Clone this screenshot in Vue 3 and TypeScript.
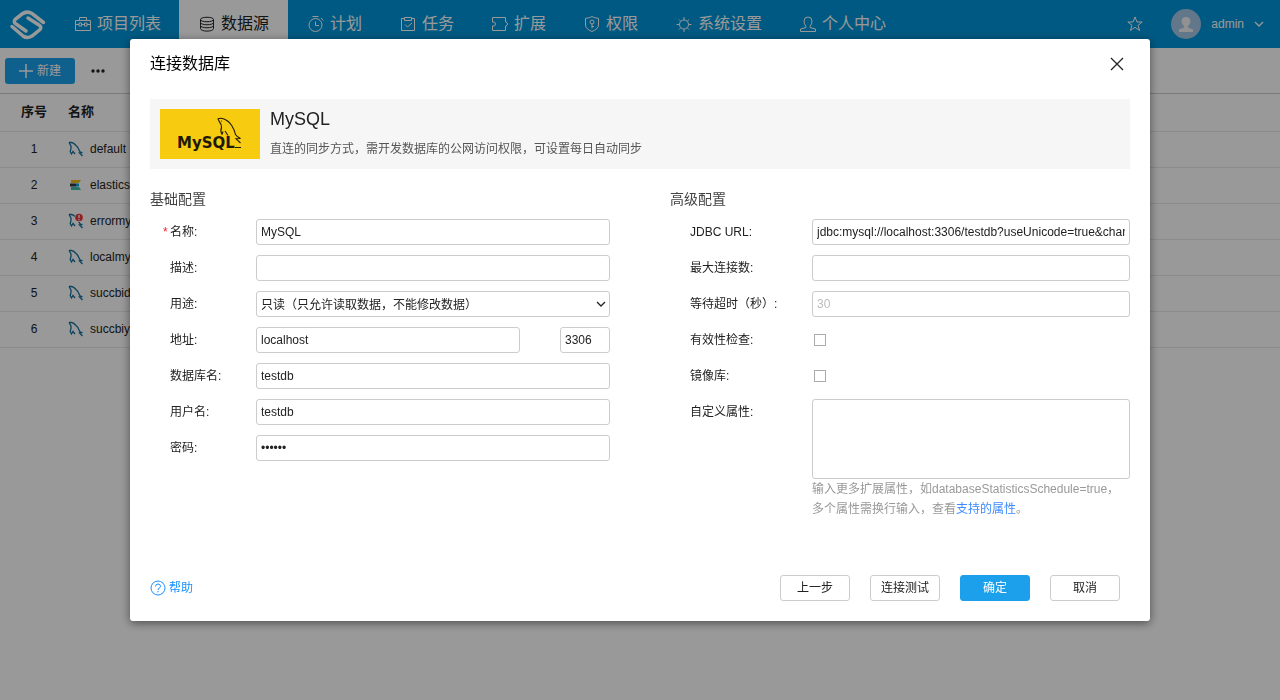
<script setup lang="ts">
import { ref } from 'vue'

interface NavItem {
  label: string
  icon: string
  active?: boolean
}

interface Source {
  name: string
  kind: 'mysql' | 'elastic' | 'error'
}

const navItems: NavItem[] = [
  { label: '项目列表', icon: 'M.5 4.500h15v10H.5zM4.500 4.500v-3h7v3M.5 8.500h3.500M6.500 8.500h3M12 8.500h3.500M4 7h2.500v3H4zM9.500 7H12v3H9.500z' },
  { label: '数据源', icon: 'M1.5 3.5C1.5 .5 14.5 .5 14.5 3.5S1.5 6.500 1.5 3.5V6.500C1.500 9.500 14.500 9.500 14.500 6.500V3.500M1.500 6.500V9.500C1.500 12.500 14.500 12.500 14.500 9.500V6.500M1.500 9.500V12.500C1.500 16 14.500 16 14.500 12.500V9.500', active: true },
  { label: '计划', icon: 'M7.500 2.500A6.500 6.500 0 1 0 7.500 15.500A6.500 6.500 0 1 0 7.500 2.500M4.500 .5h6M7.500 5.500v4h3.500M13 2l2.500 2.500' },
  { label: '任务', icon: 'M4.500 2.500h-3v12h13v-12h-3M4.500 1.500h7v3h-7zM5 8.500l2.500 2.500L12 7' },
  { label: '扩展', icon: 'M.5 1.500h13v4.500q2 0 2 2t-2 2v4.500H.5V10q3 .5 3-2t-3-2z' },
  { label: '权限', icon: 'M8 .5q3 1.800 6.500 1.800V9q0 4-6.500 6.500Q1.500 13 1.500 9V2.300Q5 2.300 8 .5M8 4A2 2 0 1 0 8 8A2 2 0 1 0 8 4M8 8v4.500M8 10.500h2' },
  { label: '系统设置', icon: 'M8 4A4.500 4.500 0 1 0 8 13A4.500 4.500 0 1 0 8 4M8 4V1M8 13v3M3.500 8.500H.5M12.500 8.500h3M4.800 5.300L3 3.500M11.200 5.300L13 3.500M4.800 11.700L3 13.500M11.200 11.700l1.800 1.800' },
  { label: '个人中心', icon: 'M6 10.500Q4 8 4 5Q4 1 8 1t4 4q0 3-2 5.500v1l5.500 1.500v2.500H.5v-2.500L6 11.500z' },
]

const sources: Source[] = [
  { name: 'default', kind: 'mysql' },
  { name: 'elastics', kind: 'elastic' },
  { name: 'errormy', kind: 'error' },
  { name: 'localmy', kind: 'mysql' },
  { name: 'succbid', kind: 'mysql' },
  { name: 'succbiy', kind: 'mysql' },
]

const form = ref({
  name: 'MySQL',
  description: '',
  usage: 'readonly',
  host: 'localhost',
  port: '3306',
  database: 'testdb',
  user: 'testdb',
  password: 'testdb',
  url: 'jdbc:mysql://localhost:3306/testdb?useUnicode=true&char',
  maxConnections: '',
  timeout: '',
  validate: false,
  mirror: false,
  properties: '',
})
</script>

<template>
  <div class="page">
    <header class="topbar">
      <svg class="brand" viewBox="0 0 44 36" aria-hidden="true">
        <path d="M37.500 16.500L26 7.500Q21 4.500 16 8L9 13.500Q7 16 10 18L20 25" />
        <path d="M6 20.500L17 30Q21 33 26 30L34 23.500Q36 21 33 19L22 12" />
      </svg>
      <nav class="nav">
        <a v-for="item in navItems" :key="item.label" href="#" :class="['nav-item', { active: item.active }]">
          <svg viewBox="0 0 16 16" aria-hidden="true"><path :d="item.icon" /></svg>
          <span>{{ item.label }}</span>
        </a>
      </nav>
      <div class="account">
        <svg class="star" viewBox="0 0 16 16" aria-hidden="true">
          <path d="M8 1l2 5h5.200L11 9.300l1.600 5.200L8 11.300l-4.600 3.200L5 9.300L.8 6H6z" />
        </svg>
        <svg class="avatar" viewBox="0 0 30 30" aria-hidden="true">
          <circle cx="15" cy="15" r="15" fill="#a4c8e6" />
          <path d="M15 8q4.500 0 4.500 4.500Q19 16 17 17v1.500l5 2v2.500H8v-2.500l5-2V17q-2-1-2.500-4.500Q10.500 8 15 8z" fill="#f2f2f2" />
        </svg>
        <span class="user">admin</span>
        <svg class="caret" viewBox="0 0 10 6" aria-hidden="true"><path d="M1 1l4 4l4-4" /></svg>
      </div>
    </header>

    <div class="toolbar">
      <button type="button" class="create">
        <svg viewBox="0 0 14 14" aria-hidden="true"><path d="M7 0v14M0 7h14" /></svg>
        <span>新建</span>
      </button>
      <button type="button" class="more" aria-label="更多">
        <svg viewBox="0 0 14 4" aria-hidden="true">
          <circle cx="2" cy="2" r="1.700" /><circle cx="7" cy="2" r="1.700" /><circle cx="12" cy="2" r="1.700" />
        </svg>
      </button>
    </div>

    <table class="sources">
      <thead>
        <tr><th class="num">序号</th><th>名称</th></tr>
      </thead>
      <tbody>
        <tr v-for="(source, index) in sources" :key="source.name">
          <td class="num">{{ index + 1 }}</td>
          <td>
            <span class="source">
              <svg v-if="source.kind === 'elastic'" viewBox="0 0 16 16" aria-hidden="true">
                <path d="M3 3h10q-1 3-3 3H3z" fill="#f0bf1a" />
                <path d="M2 6.500h6v3H2z" fill="#343741" />
                <path d="M8 6.500h3v3H8z" fill="#07a5de" />
                <path d="M3 10h7q2 0 3 3H3z" fill="#3ebeb0" />
              </svg>
              <svg v-else viewBox="0 0 16 16" aria-hidden="true">
                <path class="dolphin" d="M1 1.500h2.500q2.500.5 4 2.500q2.500 2 3.500 5q.5 1.500 2 2.500M1 1.500L3 5v2.500l-.8 3l1.300 2.500l1.500-2.500l2 2.500M14.500 11.500l-3 .5l3 3" />
                <g v-if="source.kind === 'error'">
                  <circle cx="11" cy="4.500" r="4.500" fill="#fff" />
                  <circle cx="11" cy="4.500" r="3.800" fill="#f0353c" />
                  <path d="M11 2v3M11 6v1.200" stroke="#fff" stroke-width="1.300" />
                </g>
              </svg>
              {{ source.name }}
            </span>
          </td>
        </tr>
      </tbody>
    </table>

    <div class="overlay">
      <section class="dialog" role="dialog" aria-modal="true" aria-labelledby="dialog-title">
        <header class="dialog-head">
          <h1 id="dialog-title">连接数据库</h1>
          <button type="button" class="close" aria-label="关闭">
            <svg viewBox="0 0 12 12" aria-hidden="true"><path d="M0 0l12 12M12 0L0 12" /></svg>
          </button>
        </header>

        <div class="banner">
          <svg class="mysql-logo" viewBox="0 0 100 50" role="img" aria-label="MySQL">
            <rect width="100" height="50" fill="#f7cb0f" />
            <path d="M62 25.500l1-3M62 25.500Q60 22 61.500 18.500Q61.500 15 59.500 13L58 10Q60 8.500 64 10Q69 12 72 17Q74.500 21 75.500 25.500Q77 28 80.500 29.500l-4.500.3l4.500 4.200M65 22l3 4.500" fill="none" stroke="#1f1a05" stroke-width="1.100" />
            <circle cx="61.500" cy="12" r=".6" fill="#1f1a05" />
            <text x="17" y="39" fill="#1f1a05">MySQL</text>
            <path d="M75 38.500h6" stroke="#1f1a05" stroke-width="1" />
          </svg>
          <div class="banner-text">
            <h2>MySQL</h2>
            <p>直连的同步方式，需开发数据库的公网访问权限，可设置每日自动同步</p>
          </div>
        </div>

        <form @submit.prevent>
          <div class="columns">
            <section class="column basic">
              <h3>基础配置</h3>
              <div class="row"><label for="name"><span class="required">*</span>名称:</label><input id="name" v-model="form.name" type="text"></div>
              <div class="row"><label for="description">描述:</label><input id="description" v-model="form.description" type="text"></div>
              <div class="row">
                <label for="usage">用途:</label>
                <div class="select">
                  <select id="usage" v-model="form.usage"><option value="readonly">只读（只允许读取数据，不能修改数据）</option></select>
                  <svg viewBox="0 0 10 6" aria-hidden="true"><path d="M1 1l4 4l4-4" /></svg>
                </div>
              </div>
              <div class="row">
                <label for="host">地址:</label>
                <div class="address">
                  <input id="host" v-model="form.host" type="text">
                  <input v-model="form.port" class="port" type="text" aria-label="端口">
                </div>
              </div>
              <div class="row"><label for="database">数据库名:</label><input id="database" v-model="form.database" type="text"></div>
              <div class="row"><label for="user">用户名:</label><input id="user" v-model="form.user" type="text"></div>
              <div class="row"><label for="password">密码:</label><input id="password" v-model="form.password" type="password"></div>
            </section>

            <section class="column advanced">
              <h3>高级配置</h3>
              <div class="row"><label for="url">JDBC URL:</label><input id="url" v-model="form.url" type="text"></div>
              <div class="row"><label for="max">最大连接数:</label><input id="max" v-model="form.maxConnections" type="text"></div>
              <div class="row"><label for="timeout">等待超时（秒）:</label><input id="timeout" v-model="form.timeout" type="text" placeholder="30"></div>
              <div class="row"><label for="validate">有效性检查:</label><input id="validate" v-model="form.validate" type="checkbox"></div>
              <div class="row"><label for="mirror">镜像库:</label><input id="mirror" v-model="form.mirror" type="checkbox"></div>
              <div class="row">
                <label for="properties">自定义属性:</label>
                <div>
                  <textarea id="properties" v-model="form.properties"></textarea>
                  <p class="hint">输入更多扩展属性，如databaseStatisticsSchedule=true，<br>多个属性需换行输入，查看<a href="#">支持的属性</a>。</p>
                </div>
              </div>
            </section>
          </div>

          <footer class="actions">
            <a class="help" href="#">
              <svg viewBox="0 0 16 16" aria-hidden="true">
                <circle cx="8" cy="8" r="7" /><path d="M5.500 6.500Q5.500 4 8 4t2.500 2.300Q10.500 7.500 9 8.200Q8 8.700 8 10M8 11v1.300" />
              </svg>
              帮助
            </a>
            <button type="button">上一步</button>
            <button type="button">连接测试</button>
            <button type="submit" class="primary">确定</button>
            <button type="button">取消</button>
          </footer>
        </form>
      </section>
    </div>
  </div>
</template>

<style>
body {
  margin: 0;
}
</style>

<style scoped>
.page {
  min-height: 100vh;
  background: #fff;
  color: #222;
  font: 12px/20px "Liberation Sans", "Noto Sans CJK SC", sans-serif;
}

.page * {
  box-sizing: border-box;
}

svg {
  flex: none;
  fill: none;
}

h1,
h2,
h3,
p {
  margin: 0;
  font-weight: 400;
}

a {
  text-decoration: none;
}

button,
input,
select,
textarea {
  font: inherit;
  color: inherit;
}

.topbar {
  display: flex;
  height: 48px;
  background: #0095d9;
  color: #fff;
}

.brand {
  width: 44px;
  height: 36px;
  margin: 6px 5px 6px 6px;
  stroke: #fff;
  stroke-width: 3.5;
  stroke-linecap: round;
}

.nav {
  display: flex;
}

.nav-item {
  display: flex;
  align-items: center;
  gap: 6px;
  padding: 0 18px 0 20px;
  color: #fff;
  font-size: 16px;
  line-height: 24px;
}

.nav-item svg {
  width: 16px;
  height: 16px;
  stroke: currentColor;
}

.nav-item.active {
  padding-right: 19px;
  background: #fff;
  color: #222;
}

.account {
  display: flex;
  align-items: center;
  margin-left: auto;
  padding-right: 16px;
}

.star {
  width: 16px;
  height: 16px;
  margin-right: 28px;
  stroke: #fff;
}

.avatar {
  width: 30px;
  height: 30px;
  margin-right: 10px;
}

.caret {
  width: 10px;
  height: 6px;
  margin-left: 10px;
  stroke: #fff;
  stroke-width: 1.3;
}

.toolbar {
  display: flex;
  align-items: center;
  gap: 14px;
  height: 46px;
  padding: 0 5px;
  border-bottom: 1px solid #ccc;
}

.create {
  display: flex;
  align-items: center;
  justify-content: center;
  gap: 4px;
  width: 70px;
  height: 26px;
  padding: 0;
  border: 0;
  border-radius: 3px;
  background: #1ca0eb;
  color: #fff;
}

.create svg {
  width: 14px;
  height: 14px;
  stroke: #fff;
  stroke-width: 1.5;
}

.more,
.close {
  display: flex;
  padding: 2px;
  border: 0;
  background: none;
}

.more svg {
  width: 14px;
  height: 4px;
  fill: #222;
}

.sources {
  width: 100%;
  border-collapse: collapse;
  table-layout: fixed;
}

.sources th,
.sources td {
  height: 36px;
  padding: 0;
  border-bottom: 1px solid #e8e8e8;
  text-align: left;
}

.sources th {
  height: 37px;
  font-size: 13px;
}

.sources .num {
  width: 68px;
  text-align: center;
}

.source {
  display: flex;
  align-items: center;
  gap: 6px;
}

.source svg {
  width: 16px;
  height: 16px;
}

.dolphin {
  stroke: #16729b;
  stroke-width: 1.3;
}

.overlay {
  position: fixed;
  inset: 0;
  display: flex;
  align-items: center;
  justify-content: center;
  padding-bottom: 40px;
  background: rgba(0, 0, 0, 0.4);
}

.dialog {
  width: calc(100% - 40px);
  max-width: 1020px;
  padding: 0 20px 20px;
  border-radius: 3px;
  background: #fff;
  box-shadow: 0 2px 10px rgba(0, 0, 0, 0.5);
}

.dialog-head {
  display: flex;
  align-items: center;
  justify-content: space-between;
  height: 50px;
  margin-bottom: 10px;
  padding-right: 5px;
}

.dialog-head h1 {
  color: #000;
  font-size: 16px;
  line-height: 24px;
}

.close svg {
  width: 12px;
  height: 12px;
  overflow: visible;
  stroke: #222;
  stroke-width: 1.3;
}

.banner {
  display: flex;
  gap: 10px;
  padding: 10px;
  background: #f6f6f6;
}

.mysql-logo {
  width: 100px;
  height: 50px;
}

.mysql-logo text {
  font: bold 15px "DejaVu Sans", sans-serif;
}

.banner-text h2 {
  margin-bottom: 10px;
  font-size: 18px;
  line-height: 20px;
}

.banner-text p {
  color: #555;
}

.columns {
  display: grid;
  grid-template-columns: 1fr 1fr;
  gap: 60px;
  padding-top: 20px;
}

.column {
  min-width: 0;
}

.column h3 {
  margin-bottom: 10px;
  color: #444;
  font-size: 14px;
}

.row {
  display: grid;
  align-items: start;
  margin-bottom: 10px;
  line-height: 26px;
}

.row:last-child {
  margin-bottom: 0;
}

.basic .row {
  grid-template-columns: 106px 1fr;
}

.advanced .row {
  grid-template-columns: 142px 1fr;
}

.row label {
  padding-left: 20px;
}

.required {
  display: inline-block;
  width: 7px;
  margin-left: -7px;
  color: #f5222d;
}

input,
select,
textarea {
  display: block;
  width: 100%;
  min-width: 0;
  height: 26px;
  margin: 0;
  padding: 0 4px;
  border: 1px solid #ccc;
  border-radius: 3px;
  background: #fff;
  outline: 0;
}

input::placeholder {
  color: #bbb;
}

input[type='checkbox'] {
  width: 12px;
  height: 12px;
  margin: 7px 2px;
  padding: 0;
  border-color: #aaa;
  border-radius: 0;
  appearance: none;
}

textarea {
  height: 80px;
  resize: none;
}

.select {
  position: relative;
}

select {
  appearance: none;
}

.select svg {
  position: absolute;
  top: 10px;
  right: 4px;
  width: 10px;
  height: 6px;
  stroke: #222;
  stroke-width: 1.3;
}

.address {
  display: flex;
  gap: 40px;
}

.address .port {
  flex: none;
  width: 50px;
}

.hint {
  color: #999;
  line-height: 20px;
}

.hint a {
  color: #3d8bff;
}

.actions {
  display: flex;
  align-items: center;
  gap: 20px;
  margin-top: 56px;
  padding-right: 10px;
}

.actions button {
  width: 70px;
  height: 26px;
  padding: 0;
  border: 1px solid #ccc;
  border-radius: 3px;
  background: #fff;
}

.actions .primary {
  border-color: #1ca0eb;
  background: #1ca0eb;
  color: #fff;
}

.help {
  display: flex;
  align-items: center;
  gap: 3px;
  margin-right: auto;
  color: #1890ff;
}

.help svg {
  width: 16px;
  height: 16px;
  stroke: currentColor;
}
</style>
